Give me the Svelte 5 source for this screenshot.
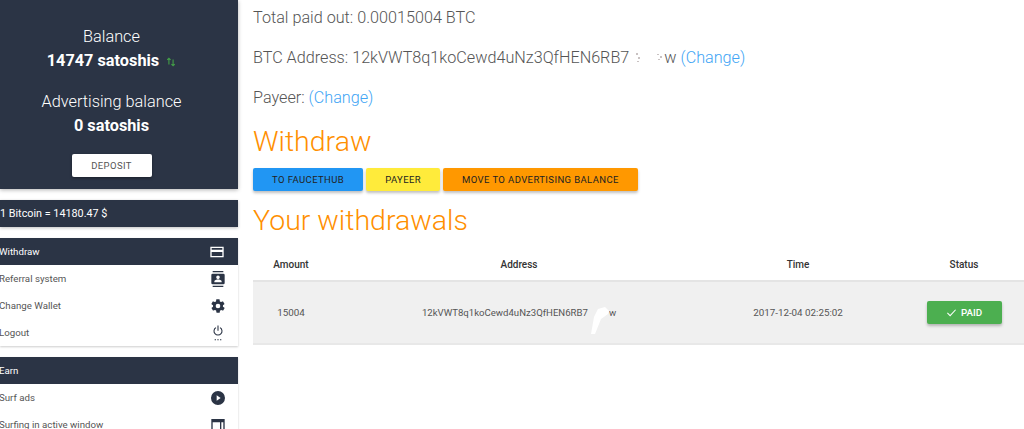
<script>
  const stats = [
    { label: 'Balance', value: '14747 satoshis', arrows: true },
    { label: 'Advertising balance', value: '0 satoshis' }
  ];

  const account = [
    { label: 'Referral system', icon: 'contacts' },
    { label: 'Change Wallet', icon: 'gear' },
    { label: 'Logout', icon: 'power' }
  ];

  const earn = [
    { label: 'Surf ads', icon: 'play' },
    { label: 'Surfing in active window', icon: 'window' }
  ];
</script>

{#snippet icon(name)}
  <svg class="icon" viewBox="0 0 24 24" width="18" height="18" fill="#2b3445">
    {#if name === 'card'}
      <path fill-rule="evenodd" d="M2 4h20v16H2zM4 6v2.500h16V6zM4 12v6h16v-6z" />
    {:else if name === 'contacts'}
      <path fill-rule="evenodd" d="M4 0h16v2H4zM4 22h16v2H4zM4 4h16a2 2 0 0 1 2 2v12a2 2 0 0 1-2 2H4a2 2 0 0 1-2-2V6a2 2 0 0 1 2-2zM12 6.800a2.700 2.700 0 1 0 0 5.400 2.700 2.700 0 0 0 0-5.400zM6.500 17h11v-1.300c0-1.900-3.700-2.800-5.500-2.800s-5.500 .9-5.500 2.800z" />
    {:else if name === 'gear'}
      <path fill-rule="evenodd" d="M19.400 13c0-.3.1-.6.1-1s0-.7-.1-1l2.100-1.600c.2-.2.2-.4.100-.6l-2-3.500c-.1-.2-.4-.3-.6-.2l-2.500 1c-.5-.4-1.100-.7-1.700-1l-.4-2.600c0-.3-.2-.5-.5-.5h-4c-.3 0-.5.2-.5.400l-.4 2.700c-.6.2-1.100.6-1.700 1l-2.500-1c-.2-.1-.5 0-.6.2l-2 3.500c-.1.200-.1.400.1.600L4.600 11c0 .3-.1.600-.1 1s0 .7.1 1l-2.100 1.600c-.2.200-.2.400-.1.600l2 3.500c.1.200.4.300.6.200l2.500-1c.5.400 1.100.700 1.700 1l.4 2.600c0 .3.200.5.500.5h4c.3 0 .5-.2.500-.4l.4-2.700c.6-.2 1.100-.6 1.700-1l2.500 1c.2.100.5 0 .6-.2l2-3.500c.1-.2.100-.4-.1-.6zM12 8.500a3.500 3.500 0 1 1 0 7 3.500 3.500 0 0 1 0-7z" />
    {:else if name === 'power'}
      <path d="M11 1h2v10h-2zM16.600 4.200l-1.400 1.400A6.500 6.500 0 1 1 8.800 5.600L7.400 4.200a8.500 8.500 0 1 0 9.200 0z" transform="translate(2.400 0) scale(.8)" />
      <path d="M7 21.500h2v1.500H7zM11 21.500h2v1.500h-2zM15 21.500h2v1.500h-2z" />
    {:else if name === 'play'}
      <path fill-rule="evenodd" d="M12 1.500a10.500 10.500 0 1 0 0 21 10.500 10.500 0 0 0 0-21zM10 8l6 4-6 4z" />
    {:else}
      <path fill-rule="evenodd" d="M2 3h20v18H2zM4 8v11h11V8zM17 8v11h3V8z" />
    {/if}
  </svg>
{/snippet}

<div class="page">
  <aside class="sidebar">
    <section class="balance">
      {#each stats as s}
        <div class="stat">
          <div class="stat-label">{s.label}</div>
          <div class="stat-value">
            {s.value}
            {#if s.arrows}
              <svg class="arrows" viewBox="0 0 12 12" width="10" height="12" fill="none" stroke="#43a047" stroke-width="1.300">
                <path d="M3.500 9V1.500M1.500 3.500l2-2 2 2M8.500 3v7.500M6.500 8.500l2 2 2-2" />
              </svg>
            {/if}
          </div>
        </div>
      {/each}
      <button class="deposit">DEPOSIT</button>
    </section>

    <div class="rate">1 Bitcoin = 14180.47 $</div>

    <nav class="menu">
      <div class="menu-head">
        <span>Withdraw</span>
        <span class="head-icon">{@render icon('card')}</span>
      </div>
      {#each account as item}
        <div class="menu-item"><span>{item.label}</span>{@render icon(item.icon)}</div>
      {/each}
    </nav>

    <nav class="menu">
      <div class="menu-head"><span>Earn</span></div>
      {#each earn as item}
        <div class="menu-item"><span>{item.label}</span>{@render icon(item.icon)}</div>
      {/each}
    </nav>
  </aside>

  <main class="content">
    <p class="line">Total paid out: 0.00015004 BTC</p>
    <p class="line">
      BTC Address: 12kVWT8q1koCewd4uNz3QfHEN6RB7<svg class="specks" viewBox="0 0 35 14" width="35" height="14" fill="#c9c2c2">
        <path d="M7 2h2v2H7zM9 6h2v2H9zM8 10h2v1H8zM28 3h2v1h-2zM31 5h2v2h-2zM29 8h2v1h-2z" />
      </svg>w
      <a href="#change">(Change)</a>
    </p>
    <p class="line">Payeer: <a href="#change">(Change)</a></p>

    <h2 class="title first">Withdraw</h2>
    <div class="actions">
      <button class="btn blue">TO FAUCETHUB</button>
      <button class="btn yellow">PAYEER</button>
      <button class="btn orange">MOVE TO ADVERTISING BALANCE</button>
    </div>

    <h2 class="title second">Your withdrawals</h2>
    <table>
      <thead>
        <tr>
          <th class="c-amount">Amount</th>
          <th class="c-address">Address</th>
          <th class="c-time">Time</th>
          <th class="c-status">Status</th>
        </tr>
      </thead>
      <tbody>
        <tr>
          <td class="c-amount">15004</td>
          <td class="c-address">
            <span class="addr">12kVWT8q1koCewd4uNz3QfHEN6RB7<span class="hidden-small"></span>w
              <svg class="smudge" viewBox="0 0 30 30" width="30" height="30">
                <path d="M4 28 L7 11 L11 3 L18 1 L22 5 L21 8 L14 13 L8 28 Z" fill="#fff" />
              </svg>
            </span>
          </td>
          <td class="c-time">2017-12-04 02:25:02</td>
          <td class="c-status">
            <span class="paid">
              <svg viewBox="0 0 24 24" width="11" height="11" fill="none" stroke="#fff" stroke-width="2.200"><path d="M3 13l6 6L21 6" /></svg>
              PAID
            </span>
          </td>
        </tr>
      </tbody>
    </table>
  </main>
</div>

<style>
  :global(body) {
    margin: 0;
    background: #fff;
    overflow: hidden;
  }
  .page {
    display: flex;
    height: 429px;
    overflow: hidden;
    font-family: Roboto, sans-serif;
    color: #555;
  }
  .sidebar {
    width: 238px;
    flex-shrink: 0;
    display: flex;
    flex-direction: column;
    gap: 11px;
  }
  .balance {
    background: #2b3445;
    height: 189px;
    box-shadow: 0 1px 4px rgba(0, 0, 0, 0.3);
    color: #fff;
    text-align: center;
    padding: 27px 15px 0 0;
    box-sizing: border-box;
    display: flex;
    flex-direction: column;
    align-items: center;
    flex-shrink: 0;
  }
  .stat { margin-bottom: 17px; }
  .stat-label { font-size: 16.300px; font-weight: 300; line-height: 20px; }
  .stat-value { font-size: 16.300px; font-weight: 700; line-height: 28px; white-space: nowrap; }
  .arrows { margin-left: 3px; vertical-align: -2px; }
  .deposit {
    margin-top: -3px;
    width: 80px;
    height: 23px;
    border: 0;
    border-radius: 2px;
    background: #fff;
    color: #555;
    font: 400 9.500px Roboto, sans-serif;
    letter-spacing: 0.4px;
    padding: 0;
    box-shadow: 0 1px 3px rgba(0, 0, 0, 0.4);
  }
  .rate {
    background: #2b3445;
    color: #fff;
    height: 27px;
    line-height: 27px;
    font-size: 10.800px;
    flex-shrink: 0;
    box-shadow: 0 1px 3px rgba(0, 0, 0, 0.25);
  }
  .menu {
    box-shadow: 0 1px 2px rgba(0, 0, 0, 0.2);
    flex-shrink: 0;
  }
  .menu-head {
    background: #2b3445;
    color: #fff;
    height: 27px;
    font-size: 9.700px;
    display: flex;
    align-items: center;
    justify-content: space-between;
    padding-right: 13px;
  }
  .head-icon .icon { fill: #fff; display: block; }
  .menu-item {
    height: 27px;
    font-size: 9.700px;
    color: #555;
    display: flex;
    align-items: center;
    justify-content: space-between;
    padding-right: 12px;
  }
  .menu-head > span:first-child, .menu-item > span { margin-left: -1px; }
  .icon { width: 16px; height: 16px; }

  .content {
    margin-left: 15px;
    flex: 1;
    min-width: 0;
  }
  .line {
    margin: 0 0 20px;
    font-size: 16.200px;
    font-weight: 300;
    line-height: 20px;
    position: relative;
    top: 8px;
    white-space: nowrap;
  }
  a { color: #42a5f5; text-decoration: none; }
  .specks { vertical-align: -2px; }
  .title {
    margin: 0;
    color: #ff8f00;
    font-size: 28.500px;
    font-weight: 300;
    line-height: 36px;
  }
  .first { margin-top: 24px; }
  .actions {
    display: flex;
    gap: 3px;
    margin-top: 8px;
  }
  .btn {
    height: 23px;
    border: 0;
    border-radius: 2px;
    color: #222;
    font: 400 9.500px Roboto, sans-serif;
    letter-spacing: 0.4px;
    padding: 0 19px;
    box-shadow: 0 2px 3px rgba(0, 0, 0, 0.25);
  }
  .blue { background: #2196f3; }
  .yellow { background: #ffeb3b; }
  .orange { background: #ff9800; }
  .second { margin-top: 12px; }

  table {
    width: 771px;
    border-collapse: collapse;
    margin-top: 8px;
    table-layout: fixed;
    font-size: 9.800px;
  }
  th {
    font-weight: 500;
    font-size: 10px;
    color: #333;
    height: 31px;
    border-bottom: 2px solid #e4e4e4;
    padding: 2px 0 0;
  }
  td {
    height: 61px;
    background: #f0f0f0;
    border-bottom: 2px solid #e8e8e8;
    padding: 0;
    color: #555;
  }
  .c-amount { width: 76px; text-align: center; }
  .c-address { width: 380px; text-align: center; }
  td.c-address { font-size: 9.600px; }
  .c-time { width: 178px; text-align: center; }
  .c-status { text-align: center; padding-left: 17px; }
  .addr { position: relative; display: inline-block; }
  .hidden-small { display: inline-block; width: 21px; }
  .smudge { position: absolute; right: -1px; top: -1px; }
  .paid {
    display: inline-flex;
    align-items: center;
    justify-content: center;
    gap: 4px;
    width: 75px;
    height: 23px;
    background: #4caf50;
    color: #fff;
    border-radius: 2px;
    font-weight: 500;
    box-shadow: 0 2px 3px rgba(0, 0, 0, 0.25);
  }
</style>
